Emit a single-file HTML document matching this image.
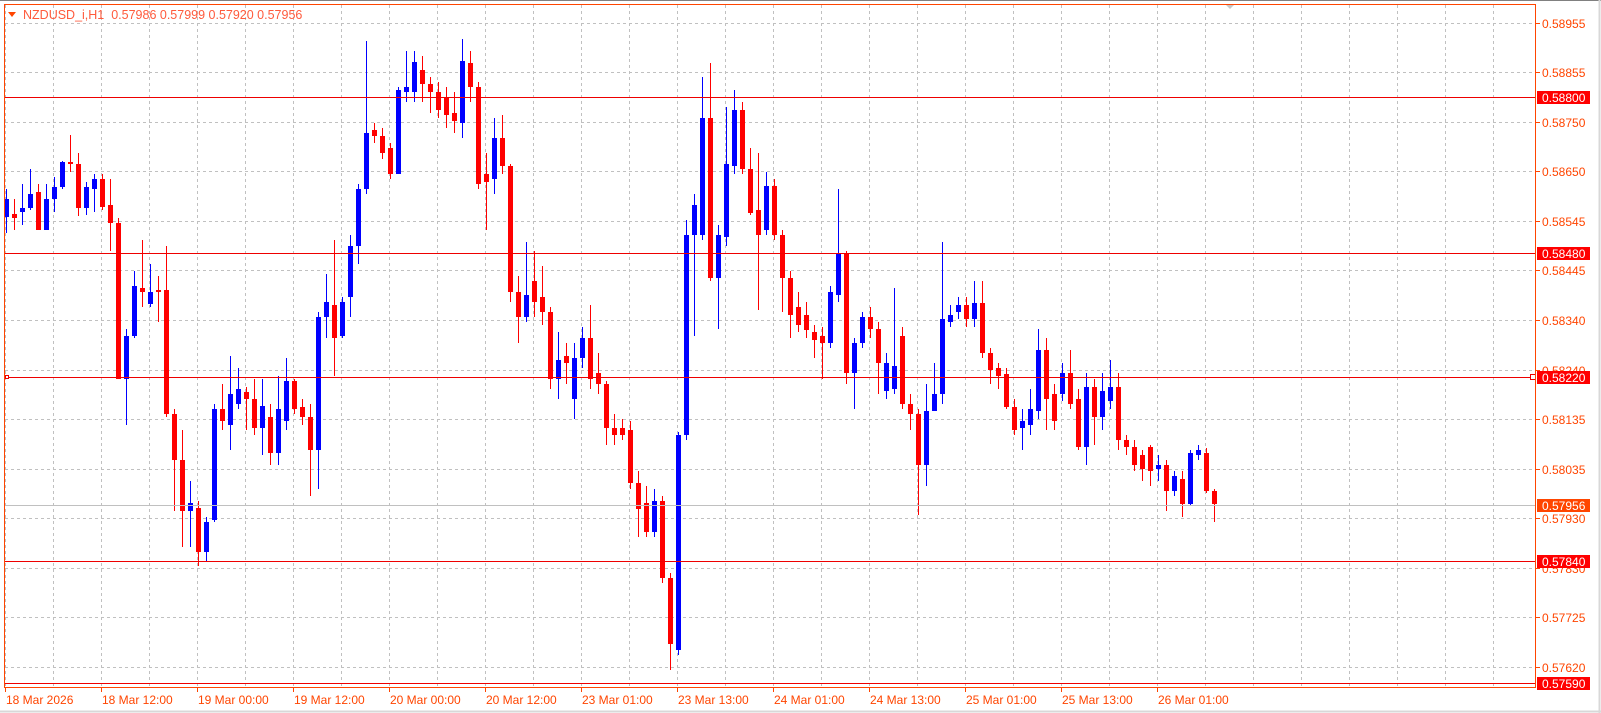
<!DOCTYPE html>
<html><head><meta charset="utf-8"><style>
html,body{margin:0;padding:0;background:#fff;}
body{width:1601px;height:713px;overflow:hidden;position:relative;font-family:"Liberation Sans",sans-serif;}
svg{position:absolute;left:0;top:0;}
</style></head><body>
<svg id="s" width="1601" height="713" xmlns="http://www.w3.org/2000/svg" font-family="Liberation Sans, sans-serif" font-size="12">
<rect x="0" y="0" width="1601" height="713" fill="#fff"/>
<line x1="0" y1="0.5" x2="1601" y2="0.5" stroke="#808080"/>
<line x1="0" y1="711.5" x2="1601" y2="711.5" stroke="#d8d8d8" stroke-width="2"/>
<line x1="1599.5" y1="0" x2="1599.5" y2="713" stroke="#d8d8d8" stroke-width="2"/>
<polygon points="1225,4 1235,4 1230,9" fill="#c8c8c8"/>
<g id="grid" stroke="#c0c0c0" stroke-dasharray="3,3" stroke-width="1"></g>
<g id="candles"></g>
<line x1="5" y1="97.5" x2="1535" y2="97.5" stroke="#ee0000"/>
<line x1="5" y1="253.5" x2="1535" y2="253.5" stroke="#ee0000"/>
<line x1="5" y1="377.5" x2="1535" y2="377.5" stroke="#ee0000"/>
<rect x="5.5" y="375.5" width="3" height="3" fill="#fff" stroke="#ee0000"/>
<rect x="1530.5" y="374.5" width="5" height="5" fill="#fff" stroke="#ee0000"/>
<line x1="5" y1="505.5" x2="1535" y2="505.5" stroke="#c0c0c0"/>
<line x1="5" y1="561.5" x2="1535" y2="561.5" stroke="#ee0000"/>
<line x1="5" y1="683.5" x2="1535" y2="683.5" stroke="#ee0000"/>
<rect x="4.5" y="4.5" width="1531" height="683" fill="none" stroke="#ff4500"/>
<polygon points="8,12 16,12 12,17" fill="#ff4500"/>
<text x="23" y="19" fill="#ff5a3c" font-size="12.5">NZDUSD_i,H1 &#160;0.57986 0.57999 0.57920 0.57956</text>
<g id="axis" fill="#ff4500"></g>
</svg>
<script>
var NS="http://www.w3.org/2000/svg";
function el(p,t,a){var e=document.createElementNS(NS,t);for(var k in a)e.setAttribute(k,a[k]);p.appendChild(e);return e;}
var grid=document.getElementById('grid'),axis=document.getElementById('axis'),cg=document.getElementById('candles');
for(var i=0;i<14;i++){var y=Math.round(22.7+49.55*i)+0.5;el(grid,'line',{x1:5,y1:y,x2:1535,y2:y});}
for(var k=0;k<32;k++){var x=Math.round(5.3+48*k)+0.5;el(grid,'line',{x1:x,y1:5,x2:x,y2:687});}
var pl=["0.58955","0.58855","0.58750","0.58650","0.58545","0.58445","0.58340","0.58240","0.58135","0.58035","0.57930","0.57830","0.57725","0.57620"];
for(var i=0;i<14;i++){var y=Math.round(22.7+49.55*i);el(axis,'rect',{x:1536,y:y,width:4,height:1});var t=el(axis,'text',{x:1542,y:y+5});t.textContent=pl[i];}
var tl=["18 Mar 2026","18 Mar 12:00","19 Mar 00:00","19 Mar 12:00","20 Mar 00:00","20 Mar 12:00","23 Mar 01:00","23 Mar 13:00","24 Mar 01:00","24 Mar 13:00","25 Mar 01:00","25 Mar 13:00","26 Mar 01:00"];
for(var i=0;i<13;i++){var x=5+96*i;el(axis,'rect',{x:x,y:688,width:1,height:4});var t=el(axis,'text',{x:x+1,y:704});t.textContent=tl[i];}
function box(y,txt,bg){el(axis,'rect',{x:1537,y:y-6,width:53,height:13,fill:bg});var t=el(axis,'text',{x:1542,y:y+5,fill:'#fff'});t.textContent=txt;}
box(97,"0.58800","#ff0000");box(253,"0.58480","#ff0000");box(377,"0.58220","#ff0000");box(505,"0.57956","#ff4500");box(561,"0.57840","#ff0000");box(683,"0.57590","#ff0000");
var D="b185,195,212,228 r195,209,213,225 b180,203,207,220 b165,190,203,205 r180,188,225,225 b180,195,225,225 b173,183,195,207 b157,158,183,185 r132,158,160,168 r150,160,203,211 b178,183,203,210 b170,175,185,207 r170,175,202,205 r175,200,218,245 r213,218,370,370 b322,328,370,415 b265,280,328,330 r235,282,285,300 b258,285,297,300 r270,283,285,315 r240,283,405,408 r400,405,450,500 r420,450,500,535 b470,492,500,535 r490,497,540,553 b505,510,540,548 b395,400,508,510 r375,400,412,420 b348,385,415,440 b360,380,395,400 r378,383,390,420 r370,390,418,425 b370,397,418,445 r395,408,443,455 b368,400,443,455 b350,372,412,420 r370,372,400,405 r390,398,408,415 r395,408,440,485 b305,310,440,478 b268,295,310,330 r235,298,330,368 b290,295,328,330 b230,240,290,310 b180,185,240,258 b40,130,185,190 r120,127,133,140 r125,133,150,155 r140,145,170,175 b85,88,170,170 b50,85,90,100 b50,61,90,100 r55,68,82,100 r75,82,90,110 r80,90,108,115 r85,95,112,125 r90,110,118,130 b38,60,120,135 r50,62,85,100 r80,85,180,185 r150,170,178,225 b115,135,175,190 r112,135,162,170 r160,162,285,295 r270,285,310,335 b237,288,310,315 r245,275,295,310 r260,290,305,318 r300,305,370,380 b325,352,370,390 r335,348,355,375 b335,350,390,410 b320,330,350,360 r298,330,370,380 r345,365,375,385 r372,375,418,435 r405,418,425,435 r410,418,425,430 r412,420,472,478 r460,472,498,525 r475,492,520,525 b478,490,520,525 r485,490,565,570 r560,565,630,655 b422,425,635,640 b215,230,425,430 b190,200,230,328 b75,115,230,235 r62,115,272,275 b220,230,272,322 b105,160,232,240 b88,108,162,170 r100,108,165,170 r145,165,208,210 r150,205,230,303 b168,182,225,230 r175,182,230,235 r225,230,272,305 r265,272,308,330 r285,300,318,325 r295,308,323,330 r318,325,332,350 r320,328,335,370 b280,285,335,340 b185,248,288,295 r245,248,365,375 b330,335,365,400 b305,310,335,340 r300,310,322,330 r315,322,355,385 b345,355,382,390 b282,358,380,385 r320,328,395,400 r385,395,405,420 r400,405,455,503 b375,402,455,475 b355,385,402,400 b237,312,385,395 b298,308,315,320 b290,298,305,312 r290,298,312,320 b275,296,312,320 r275,296,345,350 r340,345,362,375 r355,360,368,380 r360,366,398,400 r390,398,420,425 b400,412,418,440 b380,400,415,425 b322,342,402,410 r330,342,390,420 r375,385,412,420 b355,365,385,392 r342,365,395,400 r380,390,437,440 b365,378,437,455 r370,378,408,435 b365,382,408,420 b352,378,392,400 r365,378,430,440 r425,430,437,445 r430,437,455,460 r440,445,458,470 r435,437,460,475 b445,455,458,470 r450,455,480,500 b460,465,480,485 r460,468,493,505 b440,443,493,495 b435,440,445,450 r438,443,480,482 r478,480,493,510";
var arr=D.split(' '),f=1.023;
for(var i=0;i<arr.length;i++){var s=arr[i],c=s[0]=='b'?'#0000ff':'#ff0000',v=s.slice(1).split(',').map(function(n){return Math.round(+n*f);});
var x=6+8*i;var hi=Math.min(v[0],v[1]),lo=Math.max(v[3],v[2]);
el(cg,'rect',{x:x,y:hi,width:1,height:Math.max(1,lo-hi),fill:c});
el(cg,'rect',{x:x-2,y:v[1],width:5,height:Math.max(2,v[2]-v[1]),fill:c});}
</script>
</body></html>
